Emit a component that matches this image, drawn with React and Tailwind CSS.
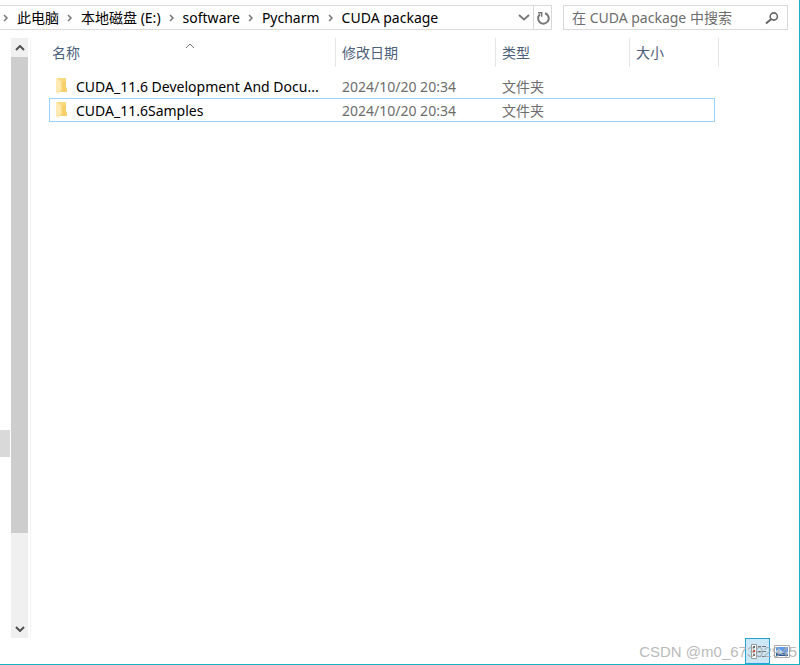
import React, { useState } from 'react';

const crumbs = ['此电脑', '本地磁盘 (E:)', 'software', 'Pycharm', 'CUDA package'];

const folders = [
  { name: 'CUDA_11.6 Development And Docu...', date: '2024/10/20 20:34', type: '文件夹' },
  { name: 'CUDA_11.6Samples', date: '2024/10/20 20:34', type: '文件夹' },
];

function Chevron({ className, d = 'M1 1l4 4 4-4', box = '0 0 10 6', stroke = 1.5 }) {
  return (
    <svg viewBox={box} className={className} fill="none" stroke="currentColor" strokeWidth={stroke} aria-hidden="true">
      <path d={d} />
    </svg>
  );
}

function FolderIcon() {
  return (
    <svg viewBox="0 0 12 16" className="mt-px h-4 w-3 shrink-0" aria-hidden="true">
      <path d="M1 0h9v9.500l1 .500v4H2z" fill="#fbdb80" />
      <path d="M6 4l4-2v7.500l1 .500v4H6z" fill="#f6d06c" />
      <path d="M0 .500l2 .500 3 2.500V12l-2 1v3l-3-1.500z" fill="#ffeab4" />
    </svg>
  );
}

function AddressBar() {
  return (
    <header className="mt-[5px] mr-[11px] flex h-[25px] gap-[11px] text-[14px] leading-5">
      <nav aria-label="路径" className="flex min-w-0 flex-1 border-y border-r border-[#d9d9d9]">
        <ol className="flex min-w-0 flex-1 items-center text-black">
          {crumbs.map((crumb) => (
            <li key={crumb} className="flex items-center whitespace-nowrap">
              <Chevron className="mx-[3px] h-2 w-[6px] text-[#777]" box="0 0 6 8" d="M1 1l3 3-3 3" />
              <a href="#" className="px-[5px]">{crumb}</a>
            </li>
          ))}
        </ol>
        <button type="button" aria-label="以前的位置" className="flex w-[18px] items-center justify-center text-[#777]">
          <Chevron className="h-[7px] w-3" box="0 0 12 7" d="M1 1l5 4.500 5-4.500" stroke={1.8} />
        </button>
        <button type="button" aria-label="刷新" className="flex w-[18px] items-center justify-center border-l border-[#d9d9d9] text-[#777]">
          <svg viewBox="0 0 14 14" className="h-[14px] w-[14px]" fill="none" stroke="currentColor" strokeWidth="2" aria-hidden="true">
            <path d="M9 2.300A5.300 5.300 0 1 1 4 3.300" />
            <path d="M2 1.800h3.700v4" strokeWidth="1.400" />
          </svg>
        </button>
      </nav>
      <label className="flex w-[225px] items-center border border-[#d9d9d9] px-2">
        <input
          type="text"
          aria-label="搜索"
          placeholder="在 CUDA package 中搜索"
          className="min-w-0 flex-1 outline-none placeholder:text-[#6d6d6d]"
        />
        <svg viewBox="0 0 14 14" className="h-[14px] w-[14px] text-[#666]" fill="none" stroke="currentColor" strokeWidth="1.600" aria-hidden="true">
          <circle cx="8.800" cy="5.500" r="3.600" />
          <path d="M6.300 8L1 12.500" strokeWidth="2" />
        </svg>
      </label>
    </header>
  );
}

function TreeScrollbar() {
  return (
    <div className="flex">
      <div className="flex w-[11px] flex-col">
        <div className="mt-[392px] h-[27px] w-[10px] bg-[#d9d9d9]" />
      </div>
      <div className="flex w-[17px] flex-col bg-[#f0f0f0] text-[#505050]">
        <button type="button" aria-label="向上滚动" className="flex h-[19px] items-center justify-center">
          <Chevron className="h-[6px] w-[10px]" d="M1 5l4-4 4 4" stroke={2} />
        </button>
        <div className="h-[476px] bg-[#cdcdcd]" />
        <button type="button" aria-label="向下滚动" className="mt-auto flex h-[19px] items-center justify-center">
          <Chevron className="h-[6px] w-[10px]" stroke={2} />
        </button>
      </div>
      <div className="w-[3px] border-r border-[#f3f3f3]" />
    </div>
  );
}

function FileTable() {
  const [selected, setSelected] = useState(1);

  return (
    <table className="ml-[18px] w-[670px] table-fixed border-separate border-spacing-0 self-start text-left text-[14px] leading-5">
      <colgroup>
        <col className="w-[287px]" />
        <col className="w-[160px]" />
        <col className="w-[134px]" />
        <col />
        <col className="w-1" />
      </colgroup>
      <thead className="text-[#4c607a]">
        <tr className="h-[29px] *:border-r *:border-[#e5e5e5] *:p-0 *:font-normal">
          <th>
            <div className="flex items-start pl-[3px]">
              <span className="w-[133px]">名称</span>
              <Chevron className="h-[6px] w-[10px] text-[#777]" d="M1 5l4-4 4 4" stroke={1} />
            </div>
          </th>
          <th><span className="pl-[6px]">修改日期</span></th>
          <th><span className="pl-[6px]">类型</span></th>
          <th colSpan={2}><span className="pl-[6px]">大小</span></th>
        </tr>
      </thead>
      <tbody className="text-[#6d6d6d]">
        <tr className="h-[7px]" aria-hidden="true"><td colSpan={5} className="p-0" /></tr>
        {folders.map((folder, idx) => {
          const edge = selected === idx ? 'border-[#99d1ff]' : 'border-transparent';
          return (
            <tr key={folder.name} onClick={() => setSelected(idx)} className="h-6 *:p-0 *:align-top">
              <td className={`border-y border-l ${edge}`}>
                <div className="flex items-start gap-2 pt-[2px] pl-[6px] text-black">
                  <FolderIcon />
                  <span className="whitespace-nowrap">{folder.name}</span>
                </div>
              </td>
              <td className={`border-y ${edge}`}><div className="pt-[2px] pl-[6px]">{folder.date}</div></td>
              <td className={`border-y ${edge}`}><div className="pt-[2px] pl-[6px]">{folder.type}</div></td>
              <td className={`border-y border-r ${edge}`} />
              <td />
            </tr>
          );
        })}
      </tbody>
    </table>
  );
}

function StatusBar() {
  return (
    <footer className="relative flex h-[26px] justify-end gap-1 pr-[9px]">
      <button type="button" aria-label="详细信息" className="flex w-[25px] items-center justify-center border border-[#26a0da] bg-[#cce8f7]">
        <svg viewBox="0 0 17 15" className="h-[15px] w-[17px]" aria-hidden="true">
          <path d="M2.500.500h5v14h-5z" fill="#fff" stroke="#999" />
          <path d="M4 2h2v2H4z" fill="#666" />
          <path d="M4 6h2v2H4z" fill="#d33" />
          <path d="M4 10h2v2H4z" fill="#345" />
          <path d="M9 2.500h3m1 0h4M9 7.500h3m1 0h4M9 12.500h3m1 0h4" stroke="#777" />
        </svg>
      </button>
      <button type="button" aria-label="大缩略图" className="flex w-4 items-center justify-center">
        <svg viewBox="0 0 16 13" className="h-[13px] w-4" aria-hidden="true">
          <path d="M.5.500h15v12H.5z" fill="#fff" stroke="#aaa" />
          <path d="M2 2h12v9H2z" fill="#5c9bee" />
          <path d="M2 6l3-2 3 2 2 2 4-1v2H2z" fill="#c6dcf4" />
          <path d="M2 11V8l4 1 3-1 5 1v2z" fill="#285a9c" />
        </svg>
      </button>
      <span className="pointer-events-none absolute right-[2px] bottom-[2px] font-['Liberation_Sans'] text-[15px] leading-5 text-[#a8a8a8]/80">
        CSDN @m0_67392945
      </span>
    </footer>
  );
}

export default function App() {
  return (
    <div className="flex min-h-screen flex-col border-r border-b border-[#18b2c4] bg-white font-['Noto_Sans','Noto_Sans_CJK_SC',sans-serif]">
      <AddressBar />
      <main className="mt-2 flex flex-1">
        <TreeScrollbar />
        <FileTable />
      </main>
      <StatusBar />
    </div>
  );
}
